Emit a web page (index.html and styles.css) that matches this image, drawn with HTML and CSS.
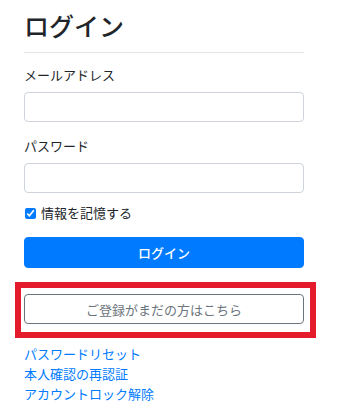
FILE: index.html
```html
<!DOCTYPE html>
<html lang="ja">
<head>
    <meta charset="UTF-8">
    <meta name="viewport" content="width=device-width, initial-scale=1.0">
    <title>ログイン</title>
    <link rel="stylesheet" href="styles.css">
</head>
<body>
    <div class="container">
        <h1>ログイン</h1>
        <hr class="divider">

        <form class="login-form">
            <div class="field">
                <label for="email">メールアドレス</label>
                <input type="email" id="email" class="text-input">
            </div>
            <div class="field field-last">
                <label for="password">パスワード</label>
                <input type="password" id="password" class="text-input">
            </div>
            <label class="remember">
                <input type="checkbox" checked>
                <span>情報を記憶する</span>
            </label>
            <button type="button" class="btn btn-primary">ログイン</button>
        </form>

        <div class="signup">
            <button type="button" class="btn btn-outline">ご登録がまだの方はこちら</button>
            <div class="highlight"></div>
        </div>

        <ul class="links">
            <li><a href="#">パスワードリセット</a></li>
            <li><a href="#">本人確認の再認証</a></li>
            <li><a href="#">アカウントロック解除</a></li>
        </ul>
    </div>
</body>
</html>
```

FILE: styles.css
```css
body {
    margin: 0;
    padding: 0;
    background: #fff;
    color: #212529;
    font-family: "Noto Sans CJK JP", "Noto Sans", sans-serif;
    font-size: 13px;
    line-height: 20px;
}

.container {
    width: 280px;
    margin-left: 24px;
}

h1 {
    margin: 10px 0 0;
    font-size: 25px;
    font-weight: 500;
    line-height: 31px;
}

.divider {
    margin: 11px 0 12px;
    border: 0;
    border-top: 1px solid #e2e4e6;
}

.field {
    margin-bottom: 14px;
}

.field-last {
    margin-bottom: 10px;
}

.field label {
    display: block;
    margin-bottom: 7px;
}

.text-input {
    display: block;
    box-sizing: border-box;
    width: 100%;
    height: 30px;
    margin: 0;
    border: 1px solid #ced4da;
    border-radius: 4px;
    background: #fff;
}

.remember {
    display: flex;
    align-items: center;
    gap: 5px;
    margin-bottom: 14px;
}

.remember input {
    width: 11px;
    height: 11px;
    margin: 0 0 0 1px;
    accent-color: #007bff;
}

.btn {
    display: block;
    box-sizing: border-box;
    width: 100%;
    margin: 0;
    border-radius: 4px;
    font-family: inherit;
    font-size: 13px;
    cursor: pointer;
}

.btn-primary {
    height: 31px;
    border: 1px solid #007bff;
    background: #007bff;
    color: #fff;
    font-weight: 500;
}

.signup {
    position: relative;
    margin-top: 26px;
}

.btn-outline {
    height: 30px;
    border: 1px solid #6c757d;
    background: #fff;
    color: #6c757d;
}

/* red annotation frame around the signup button */
.highlight {
    position: absolute;
    top: -12px;
    right: -12px;
    bottom: -14px;
    left: -9px;
    border: 6px solid #e31b2a;
    pointer-events: none;
}

.links {
    list-style: none;
    margin: 20px 0 0;
    padding: 0;
}

.links a {
    color: #007bff;
    text-decoration: none;
}
```
